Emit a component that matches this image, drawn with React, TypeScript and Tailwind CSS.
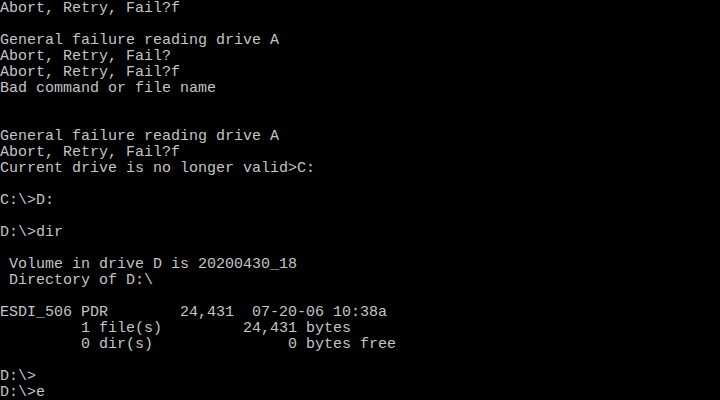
const lines = [
  "Abort, Retry, Fail?f",
  "",
  "General failure reading drive A",
  "Abort, Retry, Fail?",
  "Abort, Retry, Fail?f",
  "Bad command or file name",
  "",
  "",
  "General failure reading drive A",
  "Abort, Retry, Fail?f",
  "Current drive is no longer valid>C:",
  "",
  "C:\\>D:",
  "",
  "D:\\>dir",
  "",
  " Volume in drive D is 20200430_18",
  " Directory of D:\\",
  "",
  "ESDI_506 PDR        24,431  07-20-06 10:38a",
  "         1 file(s)         24,431 bytes",
  "         0 dir(s)               0 bytes free",
  "",
  "D:\\>",
  "D:\\>e",
];

export default function App() {
  return (
    <div className="w-[720px] h-[400px] bg-black overflow-hidden">
      <div className="flex flex-col pt-px font-['Liberation_Mono',monospace] text-[15px] leading-[16px] text-[#c4c4c4]">
        {lines.map((line, i) => (
          <div key={i} className="h-4 whitespace-pre">
            {line}
          </div>
        ))}
      </div>
    </div>
  );
}
